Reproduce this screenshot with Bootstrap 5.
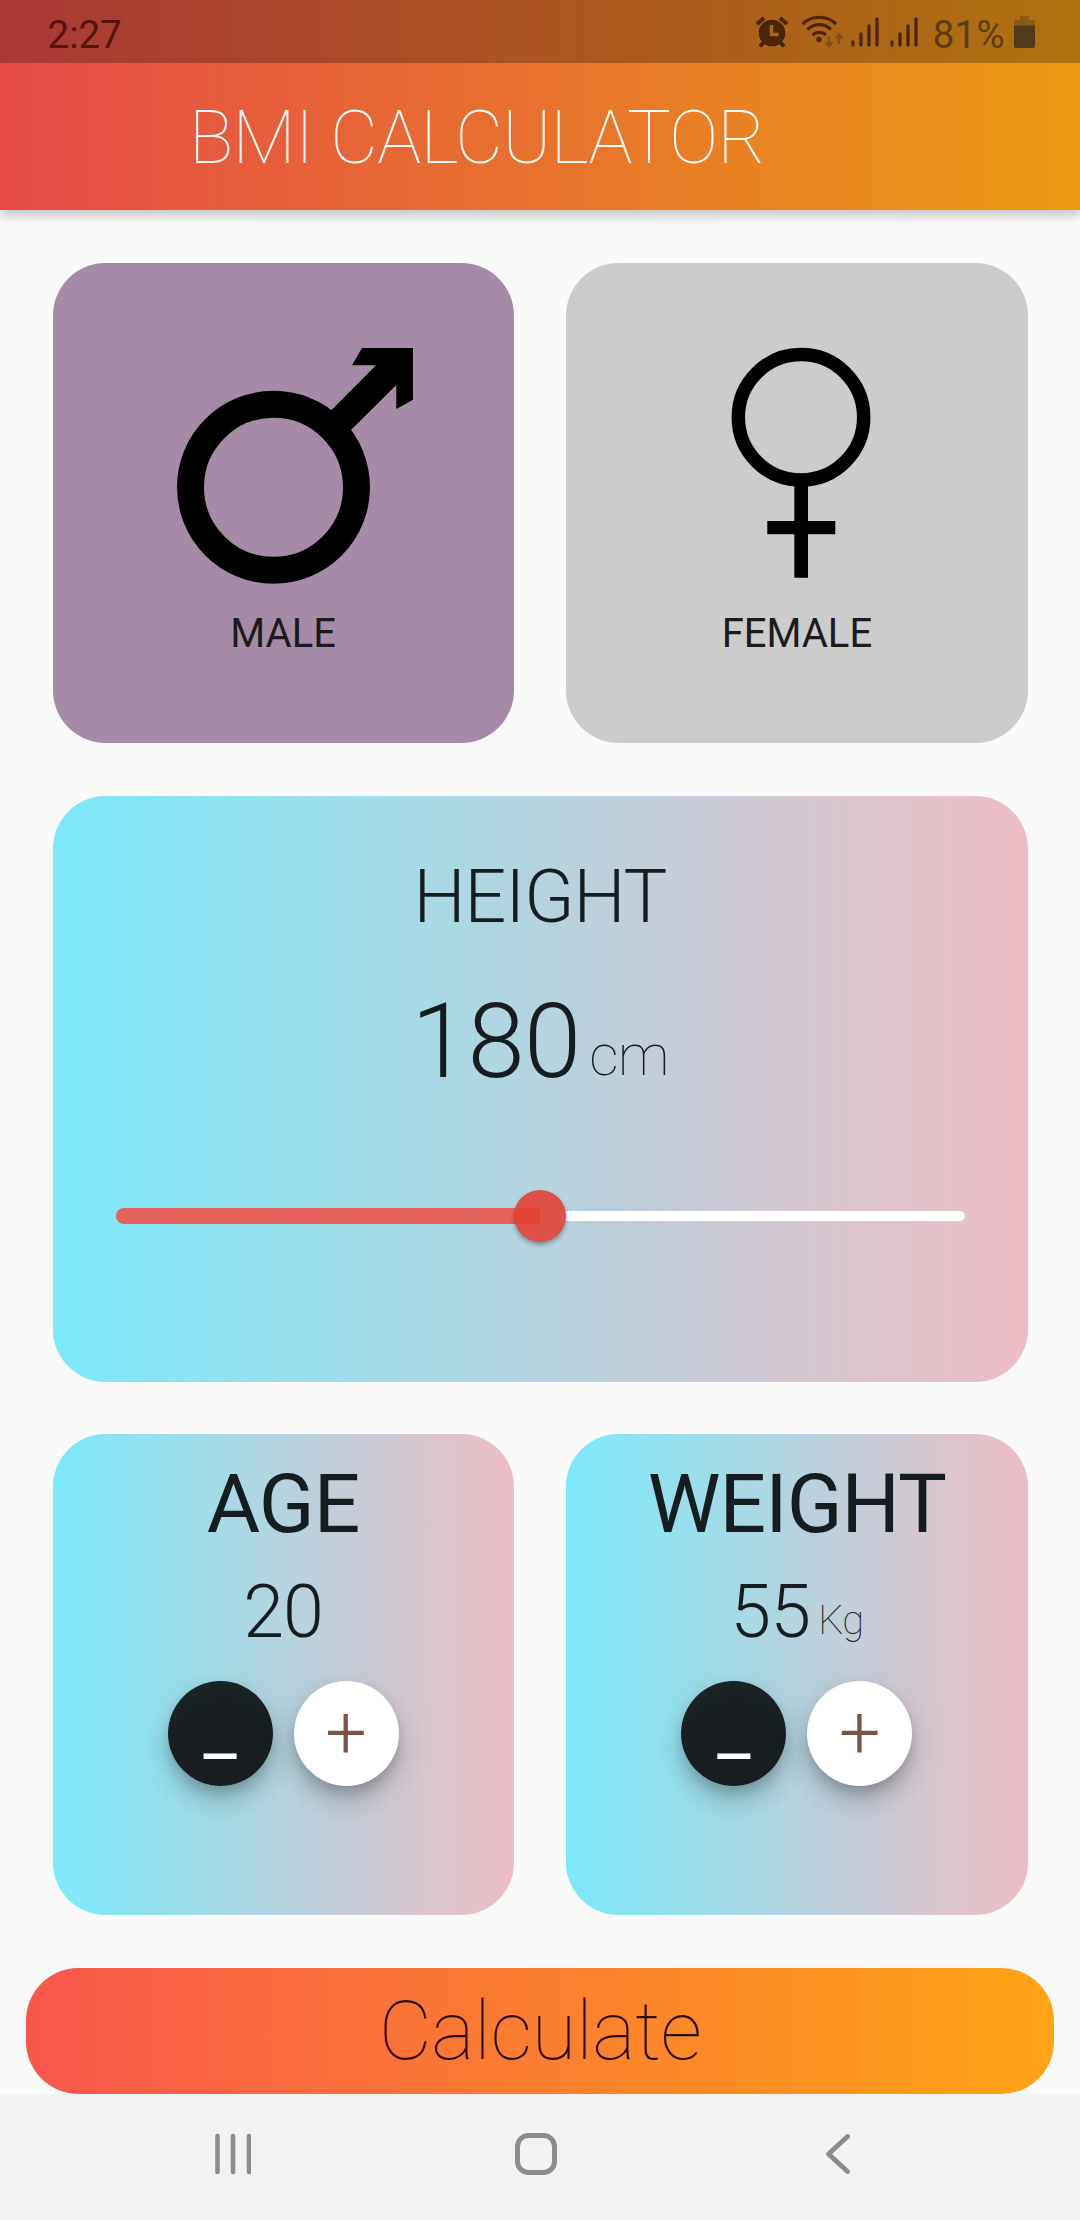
<!DOCTYPE html>
<html lang="en">
<head>
<meta charset="utf-8">
<meta name="viewport" content="width=device-width, initial-scale=1">
<title>BMI Calculator</title>
<link href="https://cdn.jsdelivr.net/npm/bootstrap@5.3.0/dist/css/bootstrap.min.css" rel="stylesheet">
<style>
  body { font-family: Roboto, sans-serif; background: #fafafa; color: #1b1b1d; }
  .screen { width: 1080px; height: 2220px; overflow: hidden; }
  .thin { font-weight: 100; }
  .lite { font-weight: 300; }
  .app-head { height: 210px; background: linear-gradient(90deg, #e64b48, #e8722d 50%, #ec9b14); box-shadow: 0 5px 10px rgba(0,0,0,.2), 0 2px 22px rgba(0,0,0,.06); }
  .status { height: 63px; background: rgba(0,0,0,.26); padding: 0 45px 0 47.5px; font-size: 38.5px; line-height: 60px; }
  .status span { padding-top: 6px; }
  .clock { color: #55140f; }
  .charge { color: #5f3c10; margin-left: 15px; letter-spacing: .3px; margin-right: 9px; }
  .status svg { color: #4b2508; }
  .alarm { margin-right: 12px; }
  .wifi { margin-right: 6px; }
  .bars + .bars { margin-left: 11px; }
  .title-bar { height: 147px; padding: 3px 0 0 189px; }
  .title-bar h1 { font-size: 73.5px; line-height: 86px; color: #fff; letter-spacing: -.7px; }
  .board { padding: 52.5px; gap: 52.5px; height: 1758px; }
  .duo { gap: 52.5px; height: 480.9px; }
  .tile { border-radius: 52.5px; }
  .tile-male { background: #a58ba8; padding-top: 85.5px; }
  .tile-female { background: #ccc; padding-top: 85.5px; }
  .tile svg { overflow: visible; }
  .sex { font-size: 40px; line-height: 99px; }
  .blend { background: linear-gradient(90deg, #7be9fa, #a5dae7 36%, #b7d2de 52%, #c9cbd7 67%, #dec5cd 84%, #edbdc4); color: #151d20; }
  .height-tile { height: 586px; padding: 58px 63px 0; }
  .h-title { font-size: 73.5px; line-height: 86px; margin-bottom: 40px; letter-spacing: -.9px; }
  .h-value { font-size: 103px; line-height: 123px; height: 123px; margin-bottom: 86.7px; letter-spacing: -.8px; }
  .h-unit { font-size: 57.75px; margin: 13.8px 0 0 9px; }
  .slide { height: 52.5px; }
  .slide-on { height: 16px; width: 50%; background: #e4625a; border-radius: 8px 0 0 8px; }
  .slide-off { height: 10.5px; width: 50%; background: #fff; border-radius: 0 5px 5px 0; }
  .knob { width: 52.5px; height: 52.5px; margin: 0 -26.25px; z-index: 1; background: linear-gradient(#e44335,#e44335) 0 50%/50% 16px no-repeat, #df5148; box-shadow: 0 3px 4px rgba(0,0,0,.3); }
  .count { padding-top: 21.6px; }
  .c-title { font-size: 82px; line-height: 96px; margin-bottom: 17px; letter-spacing: -.9px; }
  .c-value { font-size: 73.5px; line-height: 86px; height: 86px; margin-bottom: 26px; letter-spacing: -.8px; }
  .c-unit { font-size: 40px; margin: 8.8px 0 0 8px; }
  .steps { gap: 21px; }
  .round { width: 105px; height: 105px; font-size: 73.5px; line-height: 86px; box-shadow: 0 8px 13px -3px rgba(0,0,0,.18), 0 16px 26px rgba(0,0,0,.16), 0 3px 40px rgba(0,0,0,.08); }
  .minus, .minus:hover { background: radial-gradient(circle at 55% 75%, #171d20 50%, #1c282b); color: #fff; padding: 0 0 11px; }
  .plus, .plus:hover { background: #fff; color: #795548; font-weight: 350; padding: 0; }
  .calc { height: 126px; margin: 0 26.25px; border-radius: 52.5px; background: linear-gradient(90deg, #f8564c, #fb7a32 45%, #ffa416); font-size: 82px; line-height: 96px; color: #2c0c08; letter-spacing: -.5px; }
  .sys-nav { height: 126px; background: #f2f2f2; padding: 0 230px 7px 215px; color: #8c8c8c; }
</style>
</head>
<body>
<div class="screen d-flex flex-column">
  <header class="app-head flex-shrink-0 position-relative">
    <div class="status d-flex align-items-center">
      <span class="clock me-auto">2:27</span>
      <svg class="alarm" width="34" height="32" viewBox="0 0 34 32" fill="currentColor"><circle cx="17" cy="17" r="13.3"/><path d="M2 8l7-6M32 8l-7-6M9 26l-4 4.500M25 26l4 4.500" stroke="currentColor" stroke-width="4"/><path d="M16.500 9v9.500h7" fill="none" stroke="#b0651b" stroke-width="3.600"/></svg>
      <svg class="wifi" width="44" height="34" viewBox="0 0 44 34" fill="none" stroke="currentColor" stroke-width="3.200"><path d="M1.500 9c9.500-9 24-9 33.500 0M6.500 14.500c7-6.500 16.500-6.500 23.500 0M11.500 20c4-3.500 9.500-3.500 13.500 0"/><circle cx="18" cy="24.500" r="2.700" fill="currentColor" stroke="none"/><path d="M28 21v9.500M24.500 27l3.500 4 3.500-4M38 29v-9.500M34.500 23.500l3.500-4 3.500 4" stroke="#85501a" stroke-width="2.500"/></svg>
      <svg class="bars" width="28" height="30" viewBox="0 0 28 30" stroke="currentColor" stroke-width="3.300" stroke-linecap="round"><path d="M2 25v3M10 17v11M18 9v19M26 2v26"/></svg>
      <svg class="bars" width="28" height="30" viewBox="0 0 28 30" stroke="currentColor" stroke-width="3.300" stroke-linecap="round"><path d="M2 25v3M10 17v11M18 9v19M26 2v26"/></svg>
      <span class="charge">81%</span>
      <svg width="21" height="32" viewBox="0 0 21 32"><path d="M6 0h9v4h6v6H0V4h6z" fill="#8b5a13"/><path d="M0 9.500h21V30q0 2-2 2H2q-2 0-2-2z" fill="#503a1b"/></svg>
    </div>
    <div class="title-bar d-flex align-items-center"><h1 class="thin mb-0">BMI CALCULATOR</h1></div>
  </header>

  <main class="board d-flex flex-column flex-shrink-0">
    <div class="duo d-flex">
      <section class="tile tile-male flex-fill w-50 d-flex flex-column align-items-center">
        <svg width="236" height="236" viewBox="0 0 236 236"><circle cx="108.500" cy="139.300" r="83" fill="none" stroke="#000" stroke-width="27"/><path d="M197 0H248V51.700L231.300 61V37L185.700 82.300 170 96 154 80 166.300 62.300 211 17.300H187z"/></svg>
        <div class="sex">MALE</div>
      </section>
      <section class="tile tile-female flex-fill w-50 d-flex flex-column align-items-center">
        <svg width="236" height="236" viewBox="0 0 236 236"><circle cx="122" cy="69.300" r="62.700" fill="none" stroke="#000" stroke-width="13.500"/><path d="M115.300 135H129V173H156.300V186.300H129V229.700H115.300V186.300H88.300V173H115.300z"/></svg>
        <div class="sex">FEMALE</div>
      </section>
    </div>

    <section class="tile blend height-tile text-center">
      <div class="h-title lite">HEIGHT</div>
      <div class="h-value d-flex justify-content-center align-items-start"><span class="lite">180</span><span class="h-unit thin">cm</span></div>
      <div class="slide d-flex align-items-center">
        <div class="slide-on"></div><div class="knob rounded-circle flex-shrink-0"></div><div class="slide-off"></div>
      </div>
    </section>

    <div class="duo d-flex">
      <section class="tile blend count flex-fill w-50 text-center">
        <div class="c-title">AGE</div>
        <div class="c-value d-flex justify-content-center align-items-start"><span class="lite">20</span></div>
        <div class="steps d-flex justify-content-center">
          <button class="btn round minus rounded-circle border-0">_</button>
          <button class="btn round plus rounded-circle border-0">+</button>
        </div>
      </section>
      <section class="tile blend count flex-fill w-50 text-center">
        <div class="c-title">WEIGHT</div>
        <div class="c-value d-flex justify-content-center align-items-start"><span class="lite">55</span><span class="c-unit thin">Kg</span></div>
        <div class="steps d-flex justify-content-center">
          <button class="btn round minus rounded-circle border-0">_</button>
          <button class="btn round plus rounded-circle border-0">+</button>
        </div>
      </section>
    </div>
  </main>

  <button class="calc btn border-0 thin p-0 flex-shrink-0">Calculate</button>

  <nav class="sys-nav d-flex align-items-center justify-content-between flex-shrink-0">
    <svg width="36" height="42" viewBox="0 0 36 42" stroke="currentColor" stroke-width="4.600" stroke-linecap="round"><path d="M2.500 3v36M18 3v36M34 3v36"/></svg>
    <svg width="42" height="42" viewBox="0 0 42 42" fill="none" stroke="currentColor" stroke-width="5"><rect x="2.500" y="2.500" width="37" height="37" rx="11"/></svg>
    <svg width="30" height="42" viewBox="0 0 30 42" fill="none" stroke="currentColor" stroke-width="4.800" stroke-linecap="round" stroke-linejoin="round"><path d="M27.500 3.500L8.500 21l19 17.500"/></svg>
  </nav>
</div>
<script src="https://cdn.jsdelivr.net/npm/bootstrap@5.3.0/dist/js/bootstrap.bundle.min.js"></script>
</body>
</html>
